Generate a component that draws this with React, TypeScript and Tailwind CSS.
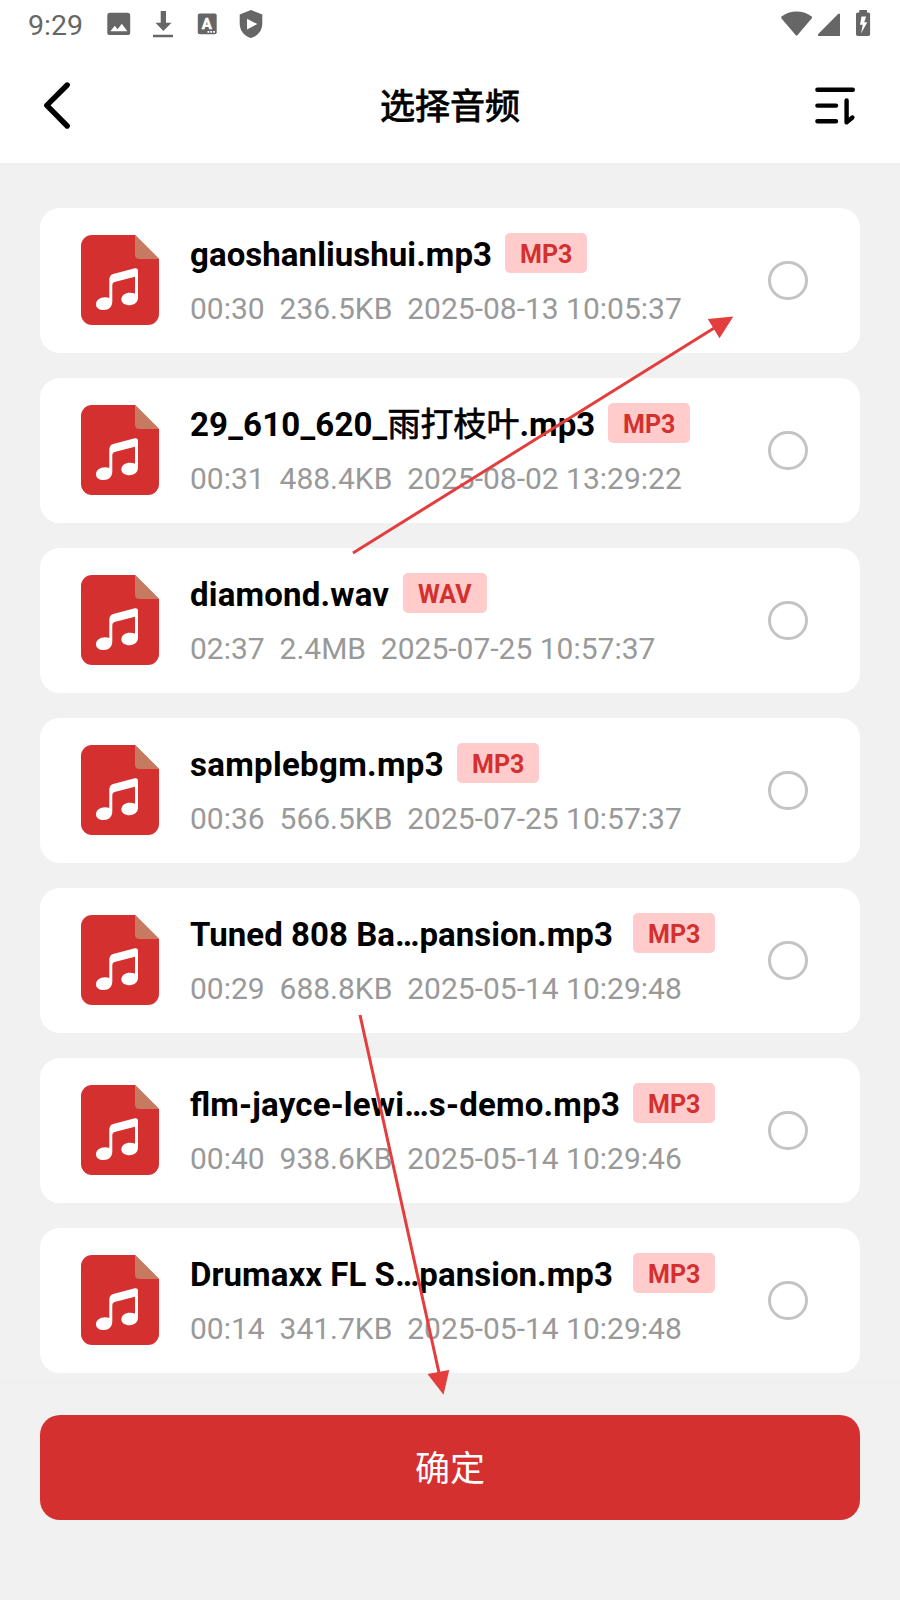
type Track = {
  name: React.ReactNode;
  type: string;
  duration: string;
  size: string;
  date: string;
  nameClass: string;
};

const tracks: Track[] = [
  { name: "gaoshanliushui.mp3", type: "MP3", duration: "00:30", size: "236.5KB", date: "2025-08-13 10:05:37", nameClass: "w-[315px] tracking-[0.06px]" },
  {
    name: (
      <>
        <span className="tracking-[0.18px]">29_610_620_</span>
        <span className="font-normal [-webkit-text-stroke:0.7px_black]">雨打枝叶</span>.mp3
      </>
    ),
    type: "MP3", duration: "00:31", size: "488.4KB", date: "2025-08-02 13:29:22", nameClass: "w-[418px]",
  },
  { name: "diamond.wav", type: "WAV", duration: "02:37", size: "2.4MB", date: "2025-07-25 10:57:37", nameClass: "w-[213px] tracking-[0.18px]" },
  { name: "samplebgm.mp3", type: "MP3", duration: "00:36", size: "566.5KB", date: "2025-07-25 10:57:37", nameClass: "w-[267px] tracking-[0.3px]" },
  { name: "Tuned 808 Ba…pansion.mp3", type: "MP3", duration: "00:29", size: "688.8KB", date: "2025-05-14 10:29:48", nameClass: "w-[443px] tracking-[0.03px]" },
  {
    name: (
      <>
        fl<span className="tracking-[0.2px]">m-jayce-lewi…s-demo.mp3</span>
      </>
    ),
    type: "MP3", duration: "00:40", size: "938.6KB", date: "2025-05-14 10:29:46", nameClass: "w-[443px]",
  },
  { name: "Drumaxx FL S…pansion.mp3", type: "MP3", duration: "00:14", size: "341.7KB", date: "2025-05-14 10:29:48", nameClass: "w-[443px] tracking-[0.03px]" },
];

function StatusBar() {
  return (
    <div className="flex h-12 items-center justify-between pl-7 pr-[29px] text-[#666]">
      <div className="flex items-center gap-5">
        <span className="w-[59px] pt-[3px] text-[28.5px] leading-[46px]">9:29</span>
        <svg className="h-12 w-6" viewBox="107 0 24 48" fill="currentColor">
          <path fillRule="evenodd" d="M110 12.7H127.5a2.7 2.7 0 0 1 2.7 2.7V32.4a2.7 2.7 0 0 1-2.7 2.7H110a2.7 2.7 0 0 1-2.7-2.7V15.4A2.7 2.7 0 0 1 110 12.7ZM110.4 31.3H127.3L121.8 23.8L117.6 29.2L114.8 25.8Z" />
        </svg>
        <svg className="h-12 w-6" viewBox="151 0 24 48" fill="currentColor">
          <path d="M160.7 11H166V22.8H171.5L163.4 31L155.5 22.8H160.7ZM153 34.8H173V37.3H153Z" />
        </svg>
        <svg className="h-12 w-6" viewBox="195 0 24 48" fill="currentColor">
          <rect x="197.8" y="13.5" width="18.9" height="20.7" rx="2" />
          <text x="206.9" y="29" textAnchor="middle" fill="white" stroke="white" strokeWidth="0.5" fontFamily="Roboto" fontSize="15" fontWeight="700">A</text>
          <path fill="white" d="M207.5 31H209.3V32.8H207.5ZM210.3 31H212.1V32.8H210.3ZM213.1 31H214.9V32.8H213.1Z" />
        </svg>
        <svg className="h-12 w-6" viewBox="239 0 24 48" fill="currentColor">
          <path fillRule="evenodd" d="M251 10L262.3 14.6V23.5C262.3 30.5 257.8 36.2 251 38C244.2 36.2 239.7 30.5 239.7 23.5V14.6ZM247 18.7V29.5L257.3 24.1Z" />
        </svg>
      </div>
      <svg className="h-12 w-[91px]" viewBox="780 0 91 48" fill="currentColor">
        <path d="M781.2 16.8Q788 11.6 796.6 11.6Q805.2 11.6 812.1 16.8L811.8 18.2L797.6 35Q796.6 36.2 795.6 35L781.3 18.2Z" />
        <path d="M838.3 13.8H840V36H818V34.2Z" />
        <path fillRule="evenodd" d="M859.3 10H867V12.6H868.4Q870.1 12.6 870.1 14.3V34.3Q870.1 36 868.4 36H857.7Q856 36 856 34.3V14.3Q856 12.6 857.7 12.6H859.3ZM861.5 16.5L860 24.7H862.8L861 33.4L867.3 22.3H864.2L866.2 16.5Z" />
      </svg>
    </div>
  );
}

function Header() {
  return (
    <header className="flex h-[115px] items-center justify-between px-10">
      <svg className="h-[115px] w-10" viewBox="40 48 40 115" fill="none" stroke="black" strokeWidth="5.4" strokeLinecap="round" strokeLinejoin="round">
        <path d="M67.2 85L46.8 105.3L67.2 126" />
      </svg>
      <h1 className="pt-[5px] text-[35px] font-normal text-black [-webkit-text-stroke:0.9px_black]">选择音频</h1>
      <svg className="h-[115px] w-10 overflow-visible" viewBox="820 48 40 115" fill="none" stroke="black" strokeWidth="4.4" strokeLinecap="round" strokeLinejoin="round">
        <path d="M817.4 89.8H852.8M817.4 105.6H836M817.4 121.3H836M846.6 100.5V122.4L852.4 117.5" />
      </svg>
    </header>
  );
}

function FileIcon() {
  return (
    <svg className="mb-[1px] h-[90px] w-[78px] shrink-0" viewBox="0 0 78 90">
      <path fill="#d4302f" d="M11 0H54L78 24V79A11 11 0 0 1 67 90H11A11 11 0 0 1 0 79V11A11 11 0 0 1 11 0Z" />
      <path fill="#c67a60" d="M54 0L78 24H58.5Q54 24 54 19.5Z" />
      <path fill="white" d="M28.3 44.5Q28.3 40.3 32.2 38.9L53.8 33.2Q57 32.7 57 36V62.8C57 67 53.5 70.2 48.6 70.2C43.8 70.2 40.4 67.8 40.4 64.4C40.4 60.5 44.3 57.8 49 57.8Q52 57.8 54 58.7V41.8L33.5 46.9Q31.3 47.7 31.3 50V66.5C31.3 71.5 27.8 75 22.8 75C18.2 75 15 72.8 15 69.2C15 65.2 19 62.3 24 62.3Q26.6 62.3 28.3 63Z" />
    </svg>
  );
}

function TrackCard({ track }: { track: Track }) {
  return (
    <li className="flex h-[145px] items-center rounded-[20px] bg-white pl-[41px] pr-[52.5px]">
      <FileIcon />
      <div className="ml-[31px] h-[95px] flex-1">
        <div className="flex h-10 items-center">
          <span className={`${track.nameClass} shrink-0 whitespace-nowrap pt-[3px] text-[33px] font-bold leading-10 text-black`}>{track.name}</span>
          <span className="h-10 min-w-[82px] shrink-0 rounded-[5px] bg-[#ffcccb] px-[15px] text-center text-[25px] font-bold leading-[44px] text-[#d4302f]">{track.type}</span>
        </div>
        <p className="mt-4 flex gap-[14.8px] whitespace-nowrap text-[30px] leading-10 text-[#999]">
          <span>{track.duration}</span>
          <span>{track.size}</span>
          <span>{track.date}</span>
        </p>
      </div>
      <span className="size-[39.5px] shrink-0 rounded-full border-[3px] border-[#c4c4c4]" />
    </li>
  );
}

export default function App() {
  return (
    <div className="relative flex h-[1600px] w-[900px] flex-col overflow-hidden bg-white font-[Roboto,'Noto_Sans_CJK_SC',sans-serif]">
      <StatusBar />
      <Header />
      <main className="flex flex-1 flex-col bg-[#f1f1f1] px-10 pt-[45px]">
        <ul className="flex flex-col gap-[25px]">
          {tracks.map((t) => (
            <TrackCard key={t.duration} track={t} />
          ))}
        </ul>
        <div className="-mx-10 mt-2 h-1 bg-[#efefef]" />
        <button className="mt-[30px] h-[105px] rounded-[20px] bg-[#d4302f] pt-[6px] text-[35px] text-white">确定</button>
      </main>
      <svg className="pointer-events-none absolute inset-0 h-[1600px] w-[900px]" viewBox="0 0 900 1600" fill="#e43d3d" stroke="#e43d3d">
        <path strokeWidth="3" d="M353 553L715 327.5M360 1015L439.5 1375" />
        <path stroke="none" d="M733.3 316.5L707.8 319L719.5 338.2ZM443.5 1394.7L427.5 1374L449.2 1370Z" />
      </svg>
    </div>
  );
}
